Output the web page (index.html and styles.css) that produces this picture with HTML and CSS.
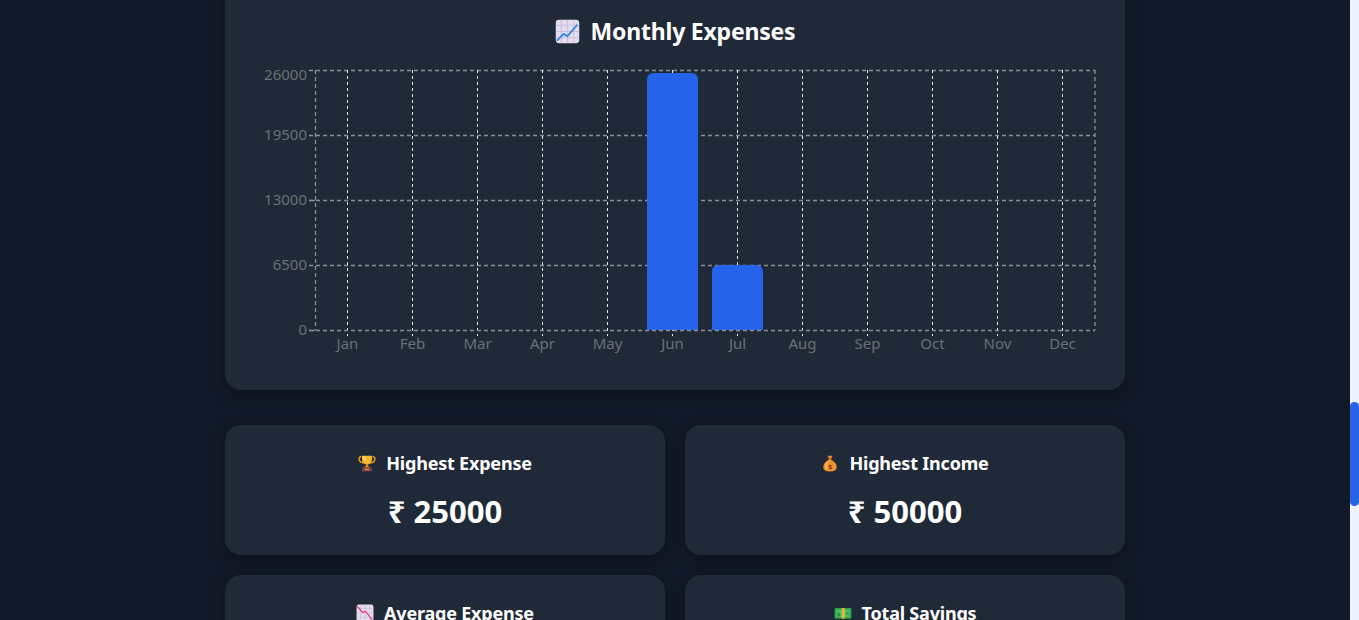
FILE: index.html
```html
<!DOCTYPE html>
<html lang="en">
<head>
<meta charset="utf-8">
<title>Monthly Expenses</title>
<link rel="stylesheet" href="styles.css">
</head>
<body>
<div class="page">
  <main class="main">
    <section class="card chart-card">
      <h2 class="chart-title">
        <svg class="emoji emoji-lg" viewBox="0 0 32 32" aria-hidden="true">
          <rect x="1" y="1" width="30" height="30" rx="4" fill="#e4dcef"/>
          <g stroke="#c7b9d8" stroke-width="1">
            <line x1="8" y1="1" x2="8" y2="31"/><line x1="16" y1="1" x2="16" y2="31"/><line x1="24" y1="1" x2="24" y2="31"/>
            <line x1="1" y1="8" x2="31" y2="8"/><line x1="1" y1="16" x2="31" y2="16"/><line x1="1" y1="24" x2="31" y2="24"/>
          </g>
          <polyline points="3,27 11,19 16,22 28,8" fill="none" stroke="#2f8ae6" stroke-width="2.4" stroke-linecap="round" stroke-linejoin="round"/>
        </svg>
        <span>Monthly Expenses</span>
      </h2>
      <svg class="chart" viewBox="0 0 852 300" width="852" height="300">
        <g class="hgrid" stroke="#8a8f98" stroke-width="1.3" stroke-dasharray="4 3">
          <line x1="60" y1="10.5" x2="846" y2="10.5"/>
          <line x1="60" y1="75.5" x2="846" y2="75.5"/>
          <line x1="60" y1="140.5" x2="846" y2="140.5"/>
          <line x1="60" y1="205.5" x2="846" y2="205.5"/>
        </g>
        <g class="vgrid" stroke="#e5e7eb" stroke-width="1" stroke-dasharray="3 3">
          <line x1="98.5" y1="10" x2="98.5" y2="276"/>
          <line x1="163.5" y1="10" x2="163.5" y2="276"/>
          <line x1="228.5" y1="10" x2="228.5" y2="276"/>
          <line x1="293.5" y1="10" x2="293.5" y2="276"/>
          <line x1="358.5" y1="10" x2="358.5" y2="276"/>
          <line x1="423.5" y1="10" x2="423.5" y2="276"/>
          <line x1="488.5" y1="10" x2="488.5" y2="276"/>
          <line x1="553.5" y1="10" x2="553.5" y2="276"/>
          <line x1="618.5" y1="10" x2="618.5" y2="276"/>
          <line x1="683.5" y1="10" x2="683.5" y2="276"/>
          <line x1="748.5" y1="10" x2="748.5" y2="276"/>
          <line x1="813.5" y1="10" x2="813.5" y2="276"/>
        </g>
        <g stroke="#8a8f98" stroke-width="1.3" stroke-dasharray="4 3">
          <line x1="66.5" y1="10" x2="66.5" y2="270"/>
          <line x1="846" y1="10" x2="846" y2="270"/>
        </g>
        <g stroke="#8a8f98" stroke-width="1.3">
          <line x1="60" y1="140.5" x2="66" y2="140.5"/>
          <line x1="60" y1="270.5" x2="66" y2="270.5"/>
        </g>
        <path d="M398 270 V20 Q398 13 405 13 H442 Q449 13 449 20 V270 Z" fill="#2563eb"/>
        <path d="M463 270 V212 Q463 205 470 205 H507 Q514 205 514 212 V270 Z" fill="#2563eb"/>
        <line x1="60" y1="270.5" x2="846" y2="270.5" stroke="#8a8f98" stroke-width="1.3" stroke-dasharray="4 3"/>
        <g class="ylab" text-anchor="end">
          <text x="58" y="20">26000</text>
          <text x="58" y="80">19500</text>
          <text x="58" y="145">13000</text>
          <text x="58" y="210">6500</text>
          <text x="58" y="275">0</text>
        </g>
        <g class="xlab" text-anchor="middle">
          <text x="98.5" y="289">Jan</text>
          <text x="163.5" y="289">Feb</text>
          <text x="228.5" y="289">Mar</text>
          <text x="293.5" y="289">Apr</text>
          <text x="358.5" y="289">May</text>
          <text x="423.5" y="289">Jun</text>
          <text x="488.5" y="289">Jul</text>
          <text x="553.5" y="289">Aug</text>
          <text x="618.5" y="289">Sep</text>
          <text x="683.5" y="289">Oct</text>
          <text x="748.5" y="289">Nov</text>
          <text x="813.5" y="289">Dec</text>
        </g>
      </svg>
    </section>

    <div class="stats">
      <div class="card stat">
        <h3 class="stat-title">
          <svg class="emoji" viewBox="0 0 32 32" aria-hidden="true">
            <path d="M6 5 Q1 5 2 10 Q3 15 10 16" fill="none" stroke="#e8a21a" stroke-width="2.5"/>
            <path d="M26 5 Q31 5 30 10 Q29 15 22 16" fill="none" stroke="#e8a21a" stroke-width="2.5"/>
            <path d="M7 3 H25 V9 Q25 18 16 19 Q7 18 7 9 Z" fill="#f7b52c"/>
            <path d="M9 4 H14 V12 Q10 12 9 8 Z" fill="#ffd25e"/>
            <rect x="14" y="18" width="4" height="5" fill="#d88b12"/>
            <rect x="11" y="22" width="10" height="2.5" rx="1" fill="#f0a823"/>
            <rect x="7" y="24" width="18" height="7" rx="1.5" fill="#7a3b52"/>
            <rect x="12" y="26.5" width="8" height="2" fill="#e8a21a"/>
          </svg>
          <span>Highest Expense</span>
        </h3>
        <p class="stat-value">₹ 25000</p>
      </div>
      <div class="card stat">
        <h3 class="stat-title">
          <svg class="emoji" viewBox="0 0 32 32" aria-hidden="true">
            <path d="M12 3 H20 L18 9 H14 Z" fill="#e98a2c"/>
            <rect x="13" y="8" width="6" height="2.5" rx="1" fill="#b3541e"/>
            <path d="M14 10 Q3 16 4 24 Q5 31 16 31 Q27 31 28 24 Q29 16 18 10 Z" fill="#f0922e"/>
            <path d="M14 10 Q6 16 7 23 Q8 28 13 29 Q8 22 15 11 Z" fill="#f7b256"/>
            <text x="16" y="26" text-anchor="middle" font-size="11" font-weight="bold" fill="#8a3a12" font-family="DejaVu Sans, sans-serif">$</text>
          </svg>
          <span>Highest Income</span>
        </h3>
        <p class="stat-value">₹ 50000</p>
      </div>
      <div class="card stat">
        <h3 class="stat-title">
          <svg class="emoji" viewBox="0 0 32 32" aria-hidden="true">
            <rect x="1" y="1" width="30" height="30" rx="4" fill="#e4dcef"/>
            <g stroke="#c7b9d8" stroke-width="1">
              <line x1="8" y1="1" x2="8" y2="31"/><line x1="16" y1="1" x2="16" y2="31"/><line x1="24" y1="1" x2="24" y2="31"/>
              <line x1="1" y1="8" x2="31" y2="8"/><line x1="1" y1="16" x2="31" y2="16"/><line x1="1" y1="24" x2="31" y2="24"/>
            </g>
            <polyline points="3,5 12,15 17,13 28,27" fill="none" stroke="#e8437a" stroke-width="2.4" stroke-linecap="round" stroke-linejoin="round"/>
          </svg>
          <span>Average Expense</span>
        </h3>
        <p class="stat-value">₹ 15750</p>
      </div>
      <div class="card stat">
        <h3 class="stat-title">
          <svg class="emoji" viewBox="0 0 32 32" aria-hidden="true">
            <rect x="1" y="7" width="30" height="19" rx="2" fill="#2ea44f"/>
            <rect x="4" y="10" width="24" height="13" rx="1" fill="#4cc26b"/>
            <rect x="14" y="7" width="5" height="19" fill="#f5b62b"/>
            <text x="8.5" y="20.5" text-anchor="middle" font-size="9" font-weight="bold" fill="#1d7a3a" font-family="DejaVu Sans, sans-serif">$</text>
            <circle cx="24" cy="16.5" r="3" fill="#2ea44f"/>
          </svg>
          <span>Total Savings</span>
        </h3>
        <p class="stat-value">₹ 18500</p>
      </div>
    </div>
  </main>
</div>
<div class="scrollbar" aria-hidden="true"><div class="scrollbar-thumb"></div></div>
</body>
</html>
```

FILE: styles.css
```css
html, body {
  margin: 0;
  padding: 0;
  height: 100%;
  overflow: hidden;
}

body {
  background: #111827;
  color: #ffffff;
  font-family: "Noto Sans", "Open Sans", "DejaVu Sans", sans-serif;
}

.page {
  padding-right: 9px;
  display: flex;
  justify-content: center;
}

.main {
  width: 900px;
  margin-top: -20px;
  display: flex;
  flex-direction: column;
}

.card {
  background: #1f2937;
  border-radius: 16px;
  box-shadow: 0 4px 14px rgba(0, 0, 0, 0.25);
}

.chart-card {
  padding: 35px 24px 30px;
  display: flex;
  flex-direction: column;
  align-items: center;
  margin-bottom: 35px;
}

.chart-title {
  margin: 0 0 13px;
  height: 32px;
  display: flex;
  align-items: center;
  gap: 11px;
  font-size: 23px;
  font-weight: 700;
  line-height: 32px;
  letter-spacing: -0.2px;
}

.emoji {
  width: 18px;
  height: 18px;
  flex: none;
}

.emoji-lg {
  width: 25px;
  height: 25px;
}

.chart {
  display: block;
  width: 852px;
  height: 300px;
}

.chart text {
  font-family: "Noto Sans", "Open Sans", sans-serif;
  font-size: 15px;
  fill: #6b6f76;
}

.stats {
  display: grid;
  grid-template-columns: 1fr 1fr;
  gap: 20px;
}

.stat {
  height: 130px;
  box-sizing: border-box;
  padding: 24px;
  display: flex;
  flex-direction: column;
  align-items: center;
}

.stat-title {
  margin: 0;
  height: 28px;
  display: flex;
  align-items: center;
  gap: 10px;
  font-size: 18px;
  font-weight: 700;
  line-height: 28px;
  letter-spacing: -0.2px;
}

.stat-value {
  margin: 14px 0 0;
  font-size: 31px;
  font-weight: 700;
  line-height: 40px;
}

.scrollbar {
  position: fixed;
  top: 0;
  right: 0;
  width: 9px;
  height: 100%;
  background: #eef2ff;
}

.scrollbar-thumb {
  position: absolute;
  top: 402px;
  left: 0;
  width: 9px;
  height: 104px;
  border-radius: 5px;
  background: #2563eb;
}
```
